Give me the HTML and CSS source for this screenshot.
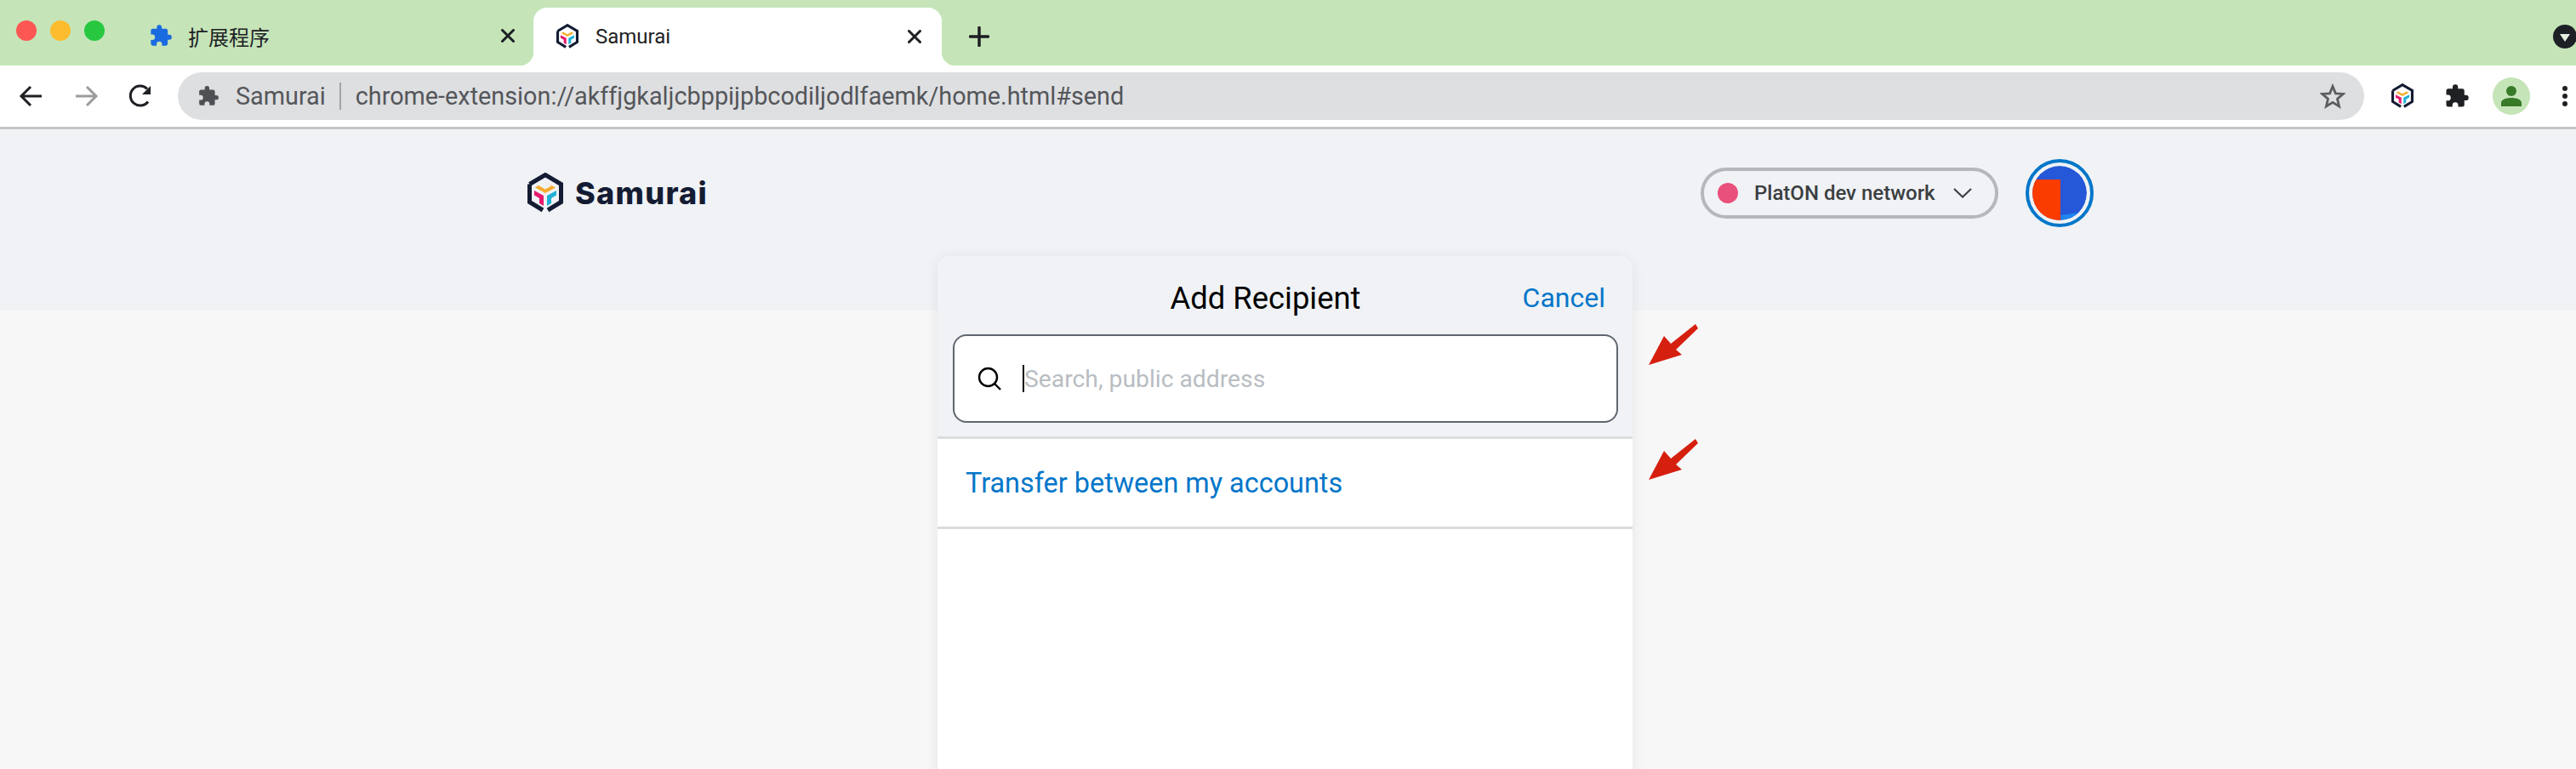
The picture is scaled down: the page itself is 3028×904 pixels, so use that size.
FILE: index.html
```html
<!DOCTYPE html>
<html lang="en">
<head>
    <meta charset="UTF-8">
    <meta name="viewport" content="width=device-width, initial-scale=1.0">
    <title>Samurai</title>
    <link rel="stylesheet" href="styles.css">
</head>
<body>

<svg class="defs" width="0" height="0">
    <symbol id="logo" viewBox="0 0 42 48">
        <path d="M2.500 13.500 21 2.500 39.500 13.500V34.500L24 44M18 44 2.500 34.500V13.500" fill="none" stroke="#141c33" stroke-width="5"/>
        <path d="M21 11 33 17.500 21 24 9 17.500 13 15 21 19.500 29 15z" fill="#f5ac2c"/>
        <path d="M8 21 19 27V39L14 36V30L8 26.500z" fill="#e6196e"/>
        <path d="M34 21 23 27V39L28 36V30L34 26.500z" fill="#1fb1d6"/>
    </symbol>
    <symbol id="puzzle" viewBox="0 0 24 24">
        <path d="M20.500 11H19V7a2 2 0 0 0-2-2h-4V3.500a2.500 2.500 0 0 0-5 0V5H4a2 2 0 0 0-2 2v3.800h1.500a2.700 2.700 0 0 1 0 5.400H2V20a2 2 0 0 0 2 2h3.800v-1.500a2.700 2.700 0 0 1 5.400 0V22H17a2 2 0 0 0 2-2v-4h1.500a2.500 2.500 0 0 0 0-5z"/>
    </symbol>
    <symbol id="close" viewBox="0 0 16 16">
        <path d="M1.500 1.500 14.500 14.500M14.500 1.500 1.500 14.500" stroke="#1d1f22" stroke-width="3" stroke-linecap="round"/>
    </symbol>
</svg>

<!-- Tab strip -->
<div class="tabstrip">
    <div class="lights">
        <span class="light red"></span>
        <span class="light yellow"></span>
        <span class="light green"></span>
    </div>
    <div class="tab">
        <svg class="tab-icon blue" width="28" height="28"><use href="#puzzle"/></svg>
        <span class="tab-title">扩展程序</span>
        <svg class="tab-close" width="16" height="16"><use href="#close"/></svg>
    </div>
    <div class="tab active">
        <svg class="tab-icon" width="26" height="30"><use href="#logo"/></svg>
        <span class="tab-title">Samurai</span>
        <svg class="tab-close" width="16" height="16"><use href="#close"/></svg>
    </div>
    <svg class="new-tab" width="24" height="24" viewBox="0 0 24 24"><path d="M12 1.500V22.500M1.500 12H22.500" stroke="#1d1f22" stroke-width="3.500" stroke-linecap="round"/></svg>
    <div class="tab-search">
        <svg width="28" height="28" viewBox="0 0 28 28"><circle cx="14" cy="14" r="14" fill="#1d2126"/><path d="M8 11H20L14 20z" fill="#e4efe0"/></svg>
    </div>
</div>

<!-- Toolbar -->
<div class="toolbar">
    <svg class="nav" width="32" height="32" viewBox="0 0 32 32"><path d="M28 16H5M15 5 4 16 15 27" fill="none" stroke="#1e2023" stroke-width="3"/></svg>
    <svg class="nav" width="32" height="32" viewBox="0 0 32 32"><path d="M4 16H27M17 5 28 16 17 27" fill="none" stroke="#9b9c9e" stroke-width="3"/></svg>
    <svg class="nav" width="32" height="32" viewBox="0 0 32 32"><path d="M25 22.500A11.500 11.500 0 1 1 24 7.500" fill="none" stroke="#1e2023" stroke-width="3"/><path d="M28 4V14H18z" fill="#1e2023"/></svg>
    <div class="omnibox">
        <svg class="site-icon" width="26" height="26"><use href="#puzzle"/></svg>
        <span class="site-name">Samurai</span>
        <span class="site-sep"></span>
        <span class="site-url">chrome-extension://akffjgkaljcbppijpbcodiljodlfaemk/home.html#send</span>
        <svg class="star" width="30" height="30" viewBox="0 0 30 30"><path d="M15 3.500 18.400 11.800 27.300 12.400 20.500 18.200 22.600 27 15 22.300 7.400 27 9.500 18.200 2.700 12.400 11.600 11.800z" fill="none" stroke="#5c5d60" stroke-width="2.800"/></svg>
    </div>
    <div class="actions">
        <svg width="26" height="30"><use href="#logo"/></svg>
        <svg class="ext" width="30" height="30"><use href="#puzzle"/></svg>
        <div class="profile">
            <svg width="26" height="26" viewBox="0 0 26 26"><circle cx="13" cy="7" r="6" fill="#377a28"/><path d="M1 25V21C1 17 7 15 13 15S25 17 25 21V25z" fill="#377a28"/></svg>
        </div>
        <div class="menu-dots"><span></span><span></span><span></span></div>
    </div>
</div>

<!-- Extension page -->
<div class="page">
    <div class="band">
        <div class="band-inner">
            <div class="brand">
                <svg width="42" height="48"><use href="#logo"/></svg>
                <span class="brand-name">Samurai</span>
            </div>
            <div class="network">
                <span class="network-dot"></span>
                <span class="network-name">PlatON dev network</span>
                <svg width="24" height="14" viewBox="0 0 24 14"><path d="M2 2 12 11.500 22 2" fill="none" stroke="#3a3d40" stroke-width="2"/></svg>
            </div>
            <div class="account">
                <svg width="64" height="64" viewBox="0 0 64 64">
                    <circle cx="32" cy="32" r="32" fill="#2458d8"/>
                    <path d="M33 58H64V64H33z" fill="#1f86f0" transform="rotate(-8 33 58)"/>
                    <path d="M0 16H33V64H0z" fill="#fa3c00"/>
                </svg>
            </div>
        </div>
    </div>

    <div class="card">
        <div class="card-top">
            <div class="card-head">
                <h1 class="card-title">Add Recipient</h1>
                <span class="card-cancel">Cancel</span>
            </div>
            <div class="search-box">
                <svg width="30" height="30" viewBox="0 0 30 30"><circle cx="13.500" cy="13.500" r="10.500" fill="none" stroke="#000" stroke-width="2.400"/><path d="M21 21 28 28" stroke="#000" stroke-width="2.400"/></svg>
                <span class="caret"></span>
                <span class="placeholder">Search, public address</span>
            </div>
        </div>
        <div class="transfer-row">Transfer between my accounts</div>

        <svg class="arrow arrow-search" width="60" height="50" viewBox="0 0 60 50"><path d="M0 49 18 15 26 24 55 1 58 6 32 31 39 37z" fill="#d6200f"/></svg>
        <svg class="arrow arrow-transfer" width="60" height="50" viewBox="0 0 60 50"><path d="M0 49 18 15 26 24 55 1 58 6 32 31 39 37z" fill="#d6200f"/></svg>
    </div>
</div>

</body>
</html>
```
FILE: styles.css
```css
html, body {
    height: 100%;
}
body {
    margin: 0;
    overflow: hidden;
    font-family: Roboto, "Liberation Sans", "Noto Sans CJK SC", sans-serif;
    background-color: #f7f7f7;
}
.defs {
    position: absolute;
}

/* Tab strip */
.tabstrip {
    display: flex;
    align-items: flex-end;
    height: 77px;
    background-color: #c5e5b8;
}
.lights {
    display: flex;
    gap: 16px;
    align-self: flex-start;
    margin: 24px 0 0 19px;
    width: 141px;
}
.light {
    width: 24px;
    height: 24px;
    border-radius: 50%;
}
.red { background-color: #fc5753; }
.yellow { background-color: #fdbc2e; }
.green { background-color: #27c83f; }
.tab {
    display: flex;
    align-items: center;
    box-sizing: border-box;
    width: 467px;
    height: 68px;
    padding: 0 22px 2px 15px;
}
.tab-icon {
    flex: none;
    fill: #000;
}
.tab-icon.blue {
    fill: #1a6ae0;
}
.tab-title {
    flex: 1;
    margin-left: 18px;
    font-size: 24px;
    color: #202124;
}
.tab-close {
    flex: none;
}
.tab.active {
    position: relative;
    width: 480px;
    padding: 0 24px 0 27px;
    border-radius: 16px 16px 0 0;
    background-color: #fff;
}
.tab.active .tab-title {
    margin-left: 20px;
}
.tab.active::before,
.tab.active::after {
    content: "";
    position: absolute;
    bottom: 0;
    width: 16px;
    height: 16px;
}
.tab.active::before {
    left: -16px;
    background: radial-gradient(circle at 0 0, transparent 16px, #fff 16.500px);
}
.tab.active::after {
    right: -16px;
    background: radial-gradient(circle at 100% 0, transparent 16px, #fff 16.500px);
}
.new-tab {
    flex: none;
    margin: 0 0 22px 32px;
}
.tab-search {
    margin: 0 -1px 20px auto;
    height: 28px;
}

/* Toolbar */
.toolbar {
    display: flex;
    align-items: center;
    box-sizing: border-box;
    height: 75px;
    padding-left: 21px;
    background-color: #fff;
    border-bottom: 3px solid #c4c5c7;
}
.nav {
    flex: none;
    margin-right: 32px;
}
.omnibox {
    display: flex;
    align-items: center;
    box-sizing: border-box;
    width: 2570px;
    height: 56px;
    margin-left: -4px;
    padding: 0 22px 0 23px;
    border-radius: 28px;
    background-color: #dedfe1;
    font-size: 28.800px;
    color: #54565a;
}
.site-icon {
    flex: none;
    fill: #4f5054;
}
.site-name {
    margin-left: 19px;
}
.site-sep {
    width: 2px;
    height: 32px;
    margin: 0 17px 0 16px;
    background-color: #a2a3a6;
}
.site-url {
    flex: 1;
}
.star {
    flex: none;
}
.actions {
    display: flex;
    align-items: center;
    margin-left: 32px;
}
.ext {
    margin-left: 36px;
    fill: #1e2023;
}
.profile {
    display: flex;
    justify-content: center;
    align-items: center;
    width: 44px;
    height: 44px;
    margin-left: 27px;
    border-radius: 50%;
    background-color: #c5e5b8;
}
.menu-dots {
    display: flex;
    flex-direction: column;
    gap: 3px;
    margin-left: 38px;
}
.menu-dots span {
    width: 6px;
    height: 6px;
    border-radius: 50%;
    background-color: #1e2023;
}

/* Extension page */
.band {
    height: 213px;
    background-color: #f0f2f5;
}
.band-inner {
    display: flex;
    align-items: center;
    width: 1841px;
    margin-left: 620px;
    padding-top: 35px;
}
.brand {
    display: flex;
    align-items: center;
    gap: 14px;
    margin-right: auto;
}
.brand-name {
    font-family: Inter, sans-serif;
    font-size: 36px;
    font-weight: 800;
    letter-spacing: 1.300px;
    color: #141c33;
}
.network {
    display: flex;
    align-items: center;
    box-sizing: border-box;
    width: 350px;
    height: 60px;
    padding: 0 26px 0 16px;
    border: 4px solid #b5b8ba;
    border-radius: 30px;
}
.network-dot {
    flex: none;
    width: 24px;
    height: 24px;
    border-radius: 50%;
    background-color: #e9507c;
}
.network-name {
    flex: 1;
    margin-left: 19px;
    font-size: 24px;
    font-weight: 500;
    color: #3b3e41;
}
.account {
    box-sizing: border-box;
    width: 80px;
    height: 80px;
    margin-left: 32px;
    padding: 4px;
    border: 4px solid #0376c9;
    border-radius: 50%;
}
.account svg {
    display: block;
    border-radius: 50%;
}

/* Card */
.card {
    position: relative;
    box-sizing: border-box;
    width: 817px;
    height: 620px;
    margin: -64px 0 0 1102px;
    border-radius: 16px 16px 0 0;
    background-color: #fff;
    box-shadow: 0 2px 16px rgba(0, 0, 0, 0.08);
}
.card-top {
    padding: 0 17px 16px 18px;
    border-radius: 16px 16px 0 0;
    border-bottom: 3px solid #dadcdd;
    background-color: #f0f2f5;
}
.card-head {
    position: relative;
    box-sizing: border-box;
    height: 92px;
    padding-top: 6px;
    display: flex;
    justify-content: center;
    align-items: center;
}
.card-title {
    margin: 0 47px 0 0;
    font-size: 36.400px;
    font-weight: 400;
    color: #000;
}
.card-cancel {
    position: absolute;
    right: 15px;
    font-size: 32px;
    color: #0376c9;
}
.search-box {
    display: flex;
    align-items: center;
    box-sizing: border-box;
    height: 104px;
    padding-left: 26px;
    border: 2px solid #5f6670;
    border-radius: 16px;
    background-color: #fff;
}
.caret {
    width: 2px;
    height: 32px;
    margin-left: 24px;
    background-color: #000;
}
.placeholder {
    font-size: 28.300px;
    color: #b8bdc2;
}
.transfer-row {
    display: flex;
    align-items: center;
    height: 103px;
    padding-left: 33px;
    border-bottom: 3px solid #dadcdd;
    font-size: 32.400px;
    color: #0376c9;
}

/* Annotation arrows */
.arrow {
    position: absolute;
    left: 836px;
}
.arrow-search {
    top: 79px;
}
.arrow-transfer {
    top: 214px;
}
```
